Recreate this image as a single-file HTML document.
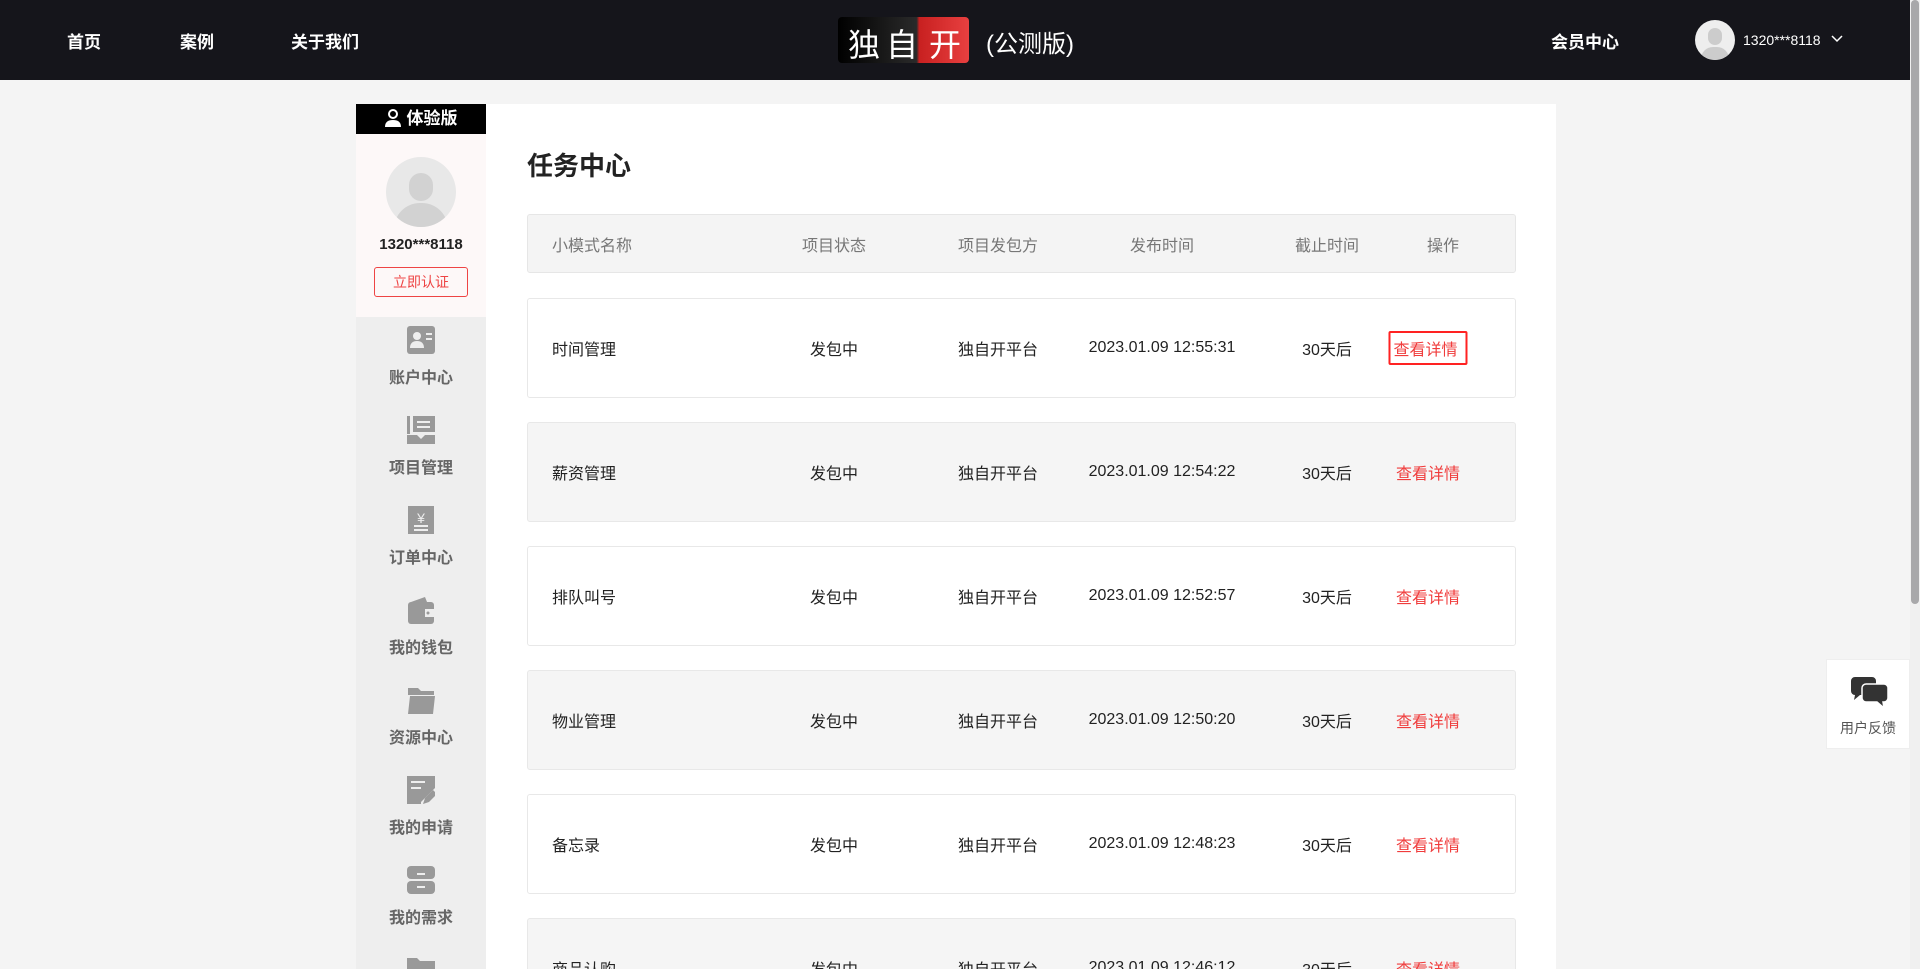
<!DOCTYPE html>
<html><head><meta charset="utf-8"><style>
*{margin:0;padding:0;box-sizing:border-box}
html,body{width:1920px;height:969px;overflow:hidden}
body{background:#f4f4f4;font-family:"Liberation Sans","Noto Sans CJK SC",sans-serif;color:#222}
#wrap{position:relative;width:1920px;height:969px;overflow:hidden}
.hd{position:absolute;left:0;top:0;width:1910px;height:80px;background:#15151b;color:#fff}
.hd .n{position:absolute;top:28px;font-size:17px;font-weight:bold}
.sb{position:absolute;left:1910px;top:0;width:10px;height:969px;background:#f0f0f0}
.sb i{position:absolute;left:1px;top:0;width:8px;height:604px;background:#a8a8aa;border-radius:4px}
.side{position:absolute;left:356px;top:104px;width:130px;height:865px;background:#eee}
.tag{position:absolute;left:0;top:0;width:130px;height:30px;background:#000;color:#fff;font-weight:bold;font-size:17px;text-align:center;line-height:30px}
.prof{position:absolute;left:0;top:30px;width:130px;height:183px;background:#fdf8f8}
.mi{position:absolute;left:0;width:130px;text-align:center}
.mi svg{display:block;margin:0 auto}
.mi span{display:block;margin-top:10px;font-size:16px;font-weight:bold;color:#666}
.main{position:absolute;left:486px;top:104px;width:1070px;height:865px;background:#fff}
.th{position:absolute;left:41px;top:110px;width:989px;height:59px;background:#f4f4f4;border:1px solid #e6e6e6;border-radius:3px;color:#777;font-size:16px}
.row{position:absolute;width:989px;height:100px;border:1px solid #e8e8e8;border-radius:3px;font-size:16px;color:#222;background:#fff}
.row.g{background:#f5f5f5}
.c{position:absolute;top:50%;transform:translate(-50%,-50%);white-space:nowrap}
.l{position:absolute;top:50%;transform:translateY(-50%);left:24px}
.red{color:#f03c3c}
</style></head><body><div id="wrap">
<div class="hd">
<div class="n" style="left:67px">首页</div>
<div class="n" style="left:180px">案例</div>
<div class="n" style="left:291px">关于我们</div>
<div style="position:absolute;left:838px;top:17px;width:131px;height:46px;border-radius:4px;overflow:hidden;background:linear-gradient(90deg,#000,#2a2a2a 60%,#c82020 62%,#e84040)">
<span style="position:absolute;left:10px;top:3px;font-size:32px;color:#fff;letter-spacing:6px">独自</span>
<span style="position:absolute;left:91px;top:3px;font-size:32px;color:#fff">开</span></div>
<div style="position:absolute;left:986px;top:24px;font-size:24px">(公测版)</div>
<div class="n" style="left:1551px">会员中心</div>
<div style="position:absolute;left:1695px;top:20px;width:40px;height:40px;border-radius:50%;background:#eee;overflow:hidden"><div style="position:absolute;left:13px;top:8px;width:14px;height:17px;border-radius:7px;background:#ccc"></div><div style="position:absolute;left:6px;top:27px;width:28px;height:20px;border-radius:12px 12px 0 0;background:#ccc"></div></div>
<div style="position:absolute;left:1743px;top:32px;font-size:14px">1320***8118</div>
<svg style="position:absolute;left:1831px;top:35px" width="12" height="8" viewBox="0 0 12 8"><path d="M1 1l5 5 5-5" stroke="#fff" stroke-width="1.5" fill="none"/></svg>
</div>
<div class="sb"><i></i></div>
<div class="side">
<div class="tag"><svg width="16" height="18" viewBox="0 0 16 18" style="vertical-align:-3px;margin-right:6px"><circle cx="8" cy="5" r="4" fill="none" stroke="#fff" stroke-width="2"/><path d="M0 18c0-5 3-7 8-7s8 2 8 7z" fill="#fff"/></svg>体验版</div>
<div class="prof">
<div style="position:absolute;left:30px;top:23px;width:70px;height:70px;border-radius:50%;background:#e8e8e8;overflow:hidden"><div style="position:absolute;left:23px;top:16px;width:24px;height:28px;border-radius:12px;background:#d2d2d2"></div><div style="position:absolute;left:8px;top:46px;width:54px;height:30px;border-radius:26px 26px 0 0;background:#d2d2d2"></div></div>
<div style="position:absolute;left:0;width:130px;top:102px;text-align:center;font-size:15px;font-weight:bold">1320***8118</div>
<div style="position:absolute;left:18px;top:133px;width:94px;height:30px;border:1px solid #e44;border-radius:3px;color:#e44;font-size:14px;text-align:center;line-height:28px">立即认证</div>
</div>
<div class="mi" style="top:222px"><svg width="28" height="28"><rect width="28" height="28" rx="3" fill="#999"/><circle cx="10" cy="10" r="4" fill="#eee"/><path d="M3 22c0-5 3-7 7-7s7 2 7 7z" fill="#eee"/><rect x="19" y="7" width="6" height="2" fill="#eee"/><rect x="19" y="12" width="6" height="2" fill="#eee"/></svg><span>账户中心</span></div>
<div class="mi" style="top:312px"><svg width="28" height="28"><rect x="0" y="0" width="3" height="18" fill="#999"/><rect x="6" y="0" width="22" height="16" fill="#999"/><rect x="10" y="5" width="13" height="2" fill="#eee"/><rect x="10" y="10" width="13" height="2" fill="#eee"/><path d="M0 19h10l4 4 4-4h10v9H0z" fill="#999"/></svg><span>项目管理</span></div>
<div class="mi" style="top:402px"><svg width="28" height="28"><rect x="1" width="26" height="28" fill="#999"/><text x="14" y="17" font-size="14" text-anchor="middle" fill="#eee" font-family="Liberation Sans">¥</text><rect x="7" y="19" width="14" height="2" fill="#eee"/><rect x="7" y="23" width="14" height="2" fill="#eee"/></svg><span>订单中心</span></div>
<div class="mi" style="top:492px"><svg width="28" height="28"><path d="M4 6l14-5 2 5z" fill="#999"/><rect x="1" y="6" width="26" height="22" rx="3" fill="#999"/><rect x="18" y="13" width="9" height="8" fill="#eee"/><circle cx="21" cy="17" r="1.5" fill="#999"/></svg><span>我的钱包</span></div>
<div class="mi" style="top:582px"><svg width="28" height="28"><path d="M1 2h10l3 3h13v4H1z" fill="#999"/><path d="M3 10h25l-2 18H1z" fill="#999"/></svg><span>资源中心</span></div>
<div class="mi" style="top:672px"><svg width="28" height="28"><path d="M0 0h28v12L14 26v2H0z" fill="#999"/><rect x="4" y="5" width="14" height="2" fill="#eee"/><rect x="4" y="11" width="10" height="2" fill="#eee"/><path d="M16 28l2-6 8-8 4 4-8 8z" fill="#999"/></svg><span>我的申请</span></div>
<div class="mi" style="top:762px"><svg width="28" height="28"><rect y="0" width="28" height="13" rx="4" fill="#999"/><rect y="15" width="28" height="13" rx="4" fill="#999"/><rect x="10" y="7" width="8" height="2" fill="#eee"/><rect x="10" y="20" width="8" height="2" fill="#eee"/></svg><span>我的需求</span></div>
<div class="mi" style="top:852px"><svg width="28" height="28"><path d="M0 2h10l3 3h15v23H0z" fill="#999"/></svg></div>
</div>
<div class="main">
<div style="position:absolute;left:41px;top:42px;font-size:26px;font-weight:bold">任务中心</div>
<div class="th"><span class="l">小模式名称</span><span class="c" style="left:306px">项目状态</span><span class="c" style="left:470px">项目发包方</span><span class="c" style="left:634px">发布时间</span><span class="c" style="left:799px">截止时间</span><span class="c" style="left:915px">操作</span></div>
<div id="rows"></div>
</div>
<div style="position:absolute;left:1826px;top:659px;width:84px;height:90px;background:#fff;border:1px solid #eee">
<svg style="position:absolute;left:23px;top:16px" width="38" height="34" viewBox="0 0 38 34"><path d="M4 1h18a4 4 0 014 4v10a4 4 0 01-4 4H10l-6 5 1-5a4 4 0 01-4-4V5a4 4 0 014-4z" fill="#333"/><path d="M16 8h18a4 4 0 014 4v10a4 4 0 01-4 4h-1l1 6-7-6H16a4 4 0 01-4-4V12a4 4 0 014-4z" fill="#333" stroke="#fff" stroke-width="1.5"/></svg>
<div style="position:absolute;left:0;width:82px;top:58px;text-align:center;font-size:14px;color:#555">用户反馈</div></div>
</div>
<script>
var d=[["时间管理","12:55:31"],["薪资管理","12:54:22"],["排队叫号","12:52:57"],["物业管理","12:50:20"],["备忘录","12:48:23"],["商品认购","12:46:12"]];
var h="";d.forEach(function(r,i){var t=194+i*124;
h+='<div class="row'+(i%2?' g':'')+'" style="left:41px;top:'+t+'px"><span class="l">'+r[0]+'</span><span class="c" style="left:306px">发包中</span><span class="c" style="left:470px">独自开平台</span><span class="c" style="left:634px">2023.01.09 '+r[1]+'</span><span class="c" style="left:799px">30天后</span><span class="c red" style="left:900px;'+(i==0?'border:2px solid #f22;border-radius:2px;padding:3px 8px 3px 3px;':'')+'">查看详情</span></div>';});
document.getElementById("rows").innerHTML=h;
</script>
</body></html>
